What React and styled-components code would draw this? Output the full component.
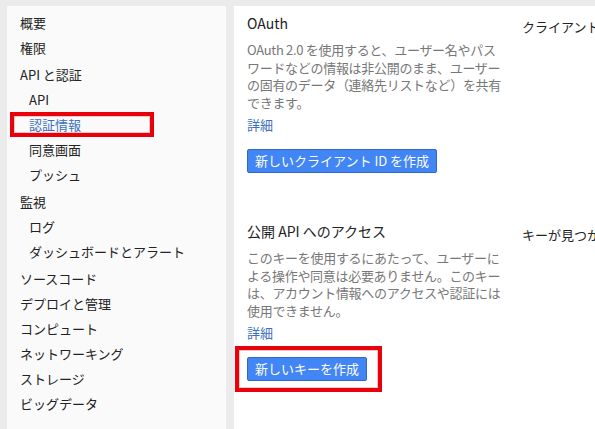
import React from 'react';
import styled, { createGlobalStyle } from 'styled-components';

const GlobalStyle = createGlobalStyle`
  html, body {
    margin: 0;
    padding: 0;
    background: #ebebeb;
  }
  body {
    font-family: "Noto Sans CJK JP", "Noto Sans", sans-serif;
    color: #222;
  }
`;

const nav = [
  { label: '概要' },
  { label: '権限' },
  {
    label: 'API と認証',
    spaced: true,
    children: [
      { label: 'API' },
      { label: '認証情報', active: true },
      { label: '同意画面' },
      { label: 'プッシュ' },
    ],
  },
  {
    label: '監視',
    spaced: true,
    children: [{ label: 'ログ' }, { label: 'ダッシュボードとアラート' }],
  },
  { label: 'ソースコード', spaced: true },
  { label: 'デプロイと管理' },
  { label: 'コンピュート' },
  { label: 'ネットワーキング' },
  { label: 'ストレージ' },
  { label: 'ビッグデータ' },
];

const App = () => {
  return (
    <>
      <GlobalStyle />
      <Page>
        <Sidebar>
          {nav.map((item) => (
            <React.Fragment key={item.label}>
              <NavItem $spaced={item.spaced}>{item.label}</NavItem>
              {item.children &&
                item.children.map((child) => (
                  <SubItem key={child.label} $active={child.active}>
                    {child.label}
                  </SubItem>
                ))}
            </React.Fragment>
          ))}
        </Sidebar>
        <Main>
          <Section>
            <Content>
              <Title>OAuth</Title>
              <Description>
                OAuth 2.0 を使用すると、ユーザー名やパス
                <br />
                ワードなどの情報は非公開のまま、ユーザー
                <br />
                の固有のデータ（連絡先リストなど）を共有
                <br />
                できます。
              </Description>
              <MoreLink>詳細</MoreLink>
              <ButtonWrap>
                <Button>新しいクライアント ID を作成</Button>
              </ButtonWrap>
            </Content>
            <Side>クライアント ID がありません</Side>
          </Section>
          <Section>
            <Content>
              <Title>公開 API へのアクセス</Title>
              <Description>
                このキーを使用するにあたって、ユーザーに
                <br />
                よる操作や同意は必要ありません。このキー
                <br />
                は、アカウント情報へのアクセスや認証には
                <br />
                使用できません。
              </Description>
              <MoreLink>詳細</MoreLink>
              <ButtonWrap $marked>
                <Button>新しいキーを作成</Button>
              </ButtonWrap>
            </Content>
            <Side>キーが見つかりません</Side>
          </Section>
        </Main>
      </Page>
    </>
  );
};

const Page = styled.div`
  display: flex;
  gap: 8px;
  padding: 6px 0 0 7px;
  height: 429px;
  box-sizing: border-box;
  overflow: hidden;
`;

const Sidebar = styled.nav`
  width: 219px;
  flex-shrink: 0;
  background: #fafafa;
  padding-top: 4px;
  box-sizing: border-box;
`;

const NavItem = styled.div`
  font-size: 13px;
  line-height: 25px;
  height: 25px;
  padding-left: 13px;
  margin-top: ${(p) => (p.$spaced ? '2px' : '0')};
  color: #222;
  white-space: nowrap;
`;

const SubItem = styled.div`
  font-size: 13px;
  line-height: 25px;
  height: 25px;
  padding-left: ${(p) => (p.$active ? '19px' : '22px')};
  margin-left: ${(p) => (p.$active ? '3px' : '0')};
  width: ${(p) => (p.$active ? '144px' : 'auto')};
  box-sizing: border-box;
  color: ${(p) => (p.$active ? '#3b6fc0' : '#222')};
  box-shadow: ${(p) =>
    p.$active ? 'inset 0 0 0 4px #e8000b, inset 0 0 0 5px #f6c6c6' : 'none'};
  white-space: nowrap;
`;

const Main = styled.main`
  flex: 1;
  background: #fff;
  padding: 7px 0 0 13px;
  overflow: hidden;
`;

const Section = styled.section`
  display: flex;
  gap: 21px;
  height: 208px;
`;

const Content = styled.div`
  width: 254px;
  flex-shrink: 0;
`;

const Title = styled.h2`
  margin: 0;
  font-size: 14px;
  font-weight: normal;
  line-height: 20px;
  color: #222;
  white-space: nowrap;
`;

const Description = styled.p`
  margin: 8px 0 0;
  font-size: 13px;
  line-height: 17.5px;
  color: #777;
  white-space: nowrap;
  letter-spacing: -0.3px;
`;

const MoreLink = styled.a`
  display: block;
  margin-top: 5px;
  font-size: 13px;
  line-height: 17px;
  color: #3b6fc0;
  cursor: pointer;
`;

const ButtonWrap = styled.div`
  display: inline-block;
  margin: ${(p) => (p.$marked ? '5px 0 0 -12px' : '16px 0 0 0')};
  padding: ${(p) => (p.$marked ? '11px 15px 11px 12px' : '0')};
  box-shadow: ${(p) =>
    p.$marked ? 'inset 0 0 0 4px #e8000b, inset 0 0 0 5px #f6c6c6' : 'none'};
`;

const Button = styled.button`
  display: block;
  height: 24px;
  padding: 0 7px;
  font-family: inherit;
  font-size: 13px;
  line-height: 22px;
  color: #fff;
  background: #4285f4;
  border: 1px solid #3367c8;
  border-radius: 2px;
  white-space: nowrap;
`;

const Side = styled.div`
  padding-top: 4px;
  font-size: 13px;
  line-height: 20px;
  color: #222;
  white-space: nowrap;
`;

export default App;
